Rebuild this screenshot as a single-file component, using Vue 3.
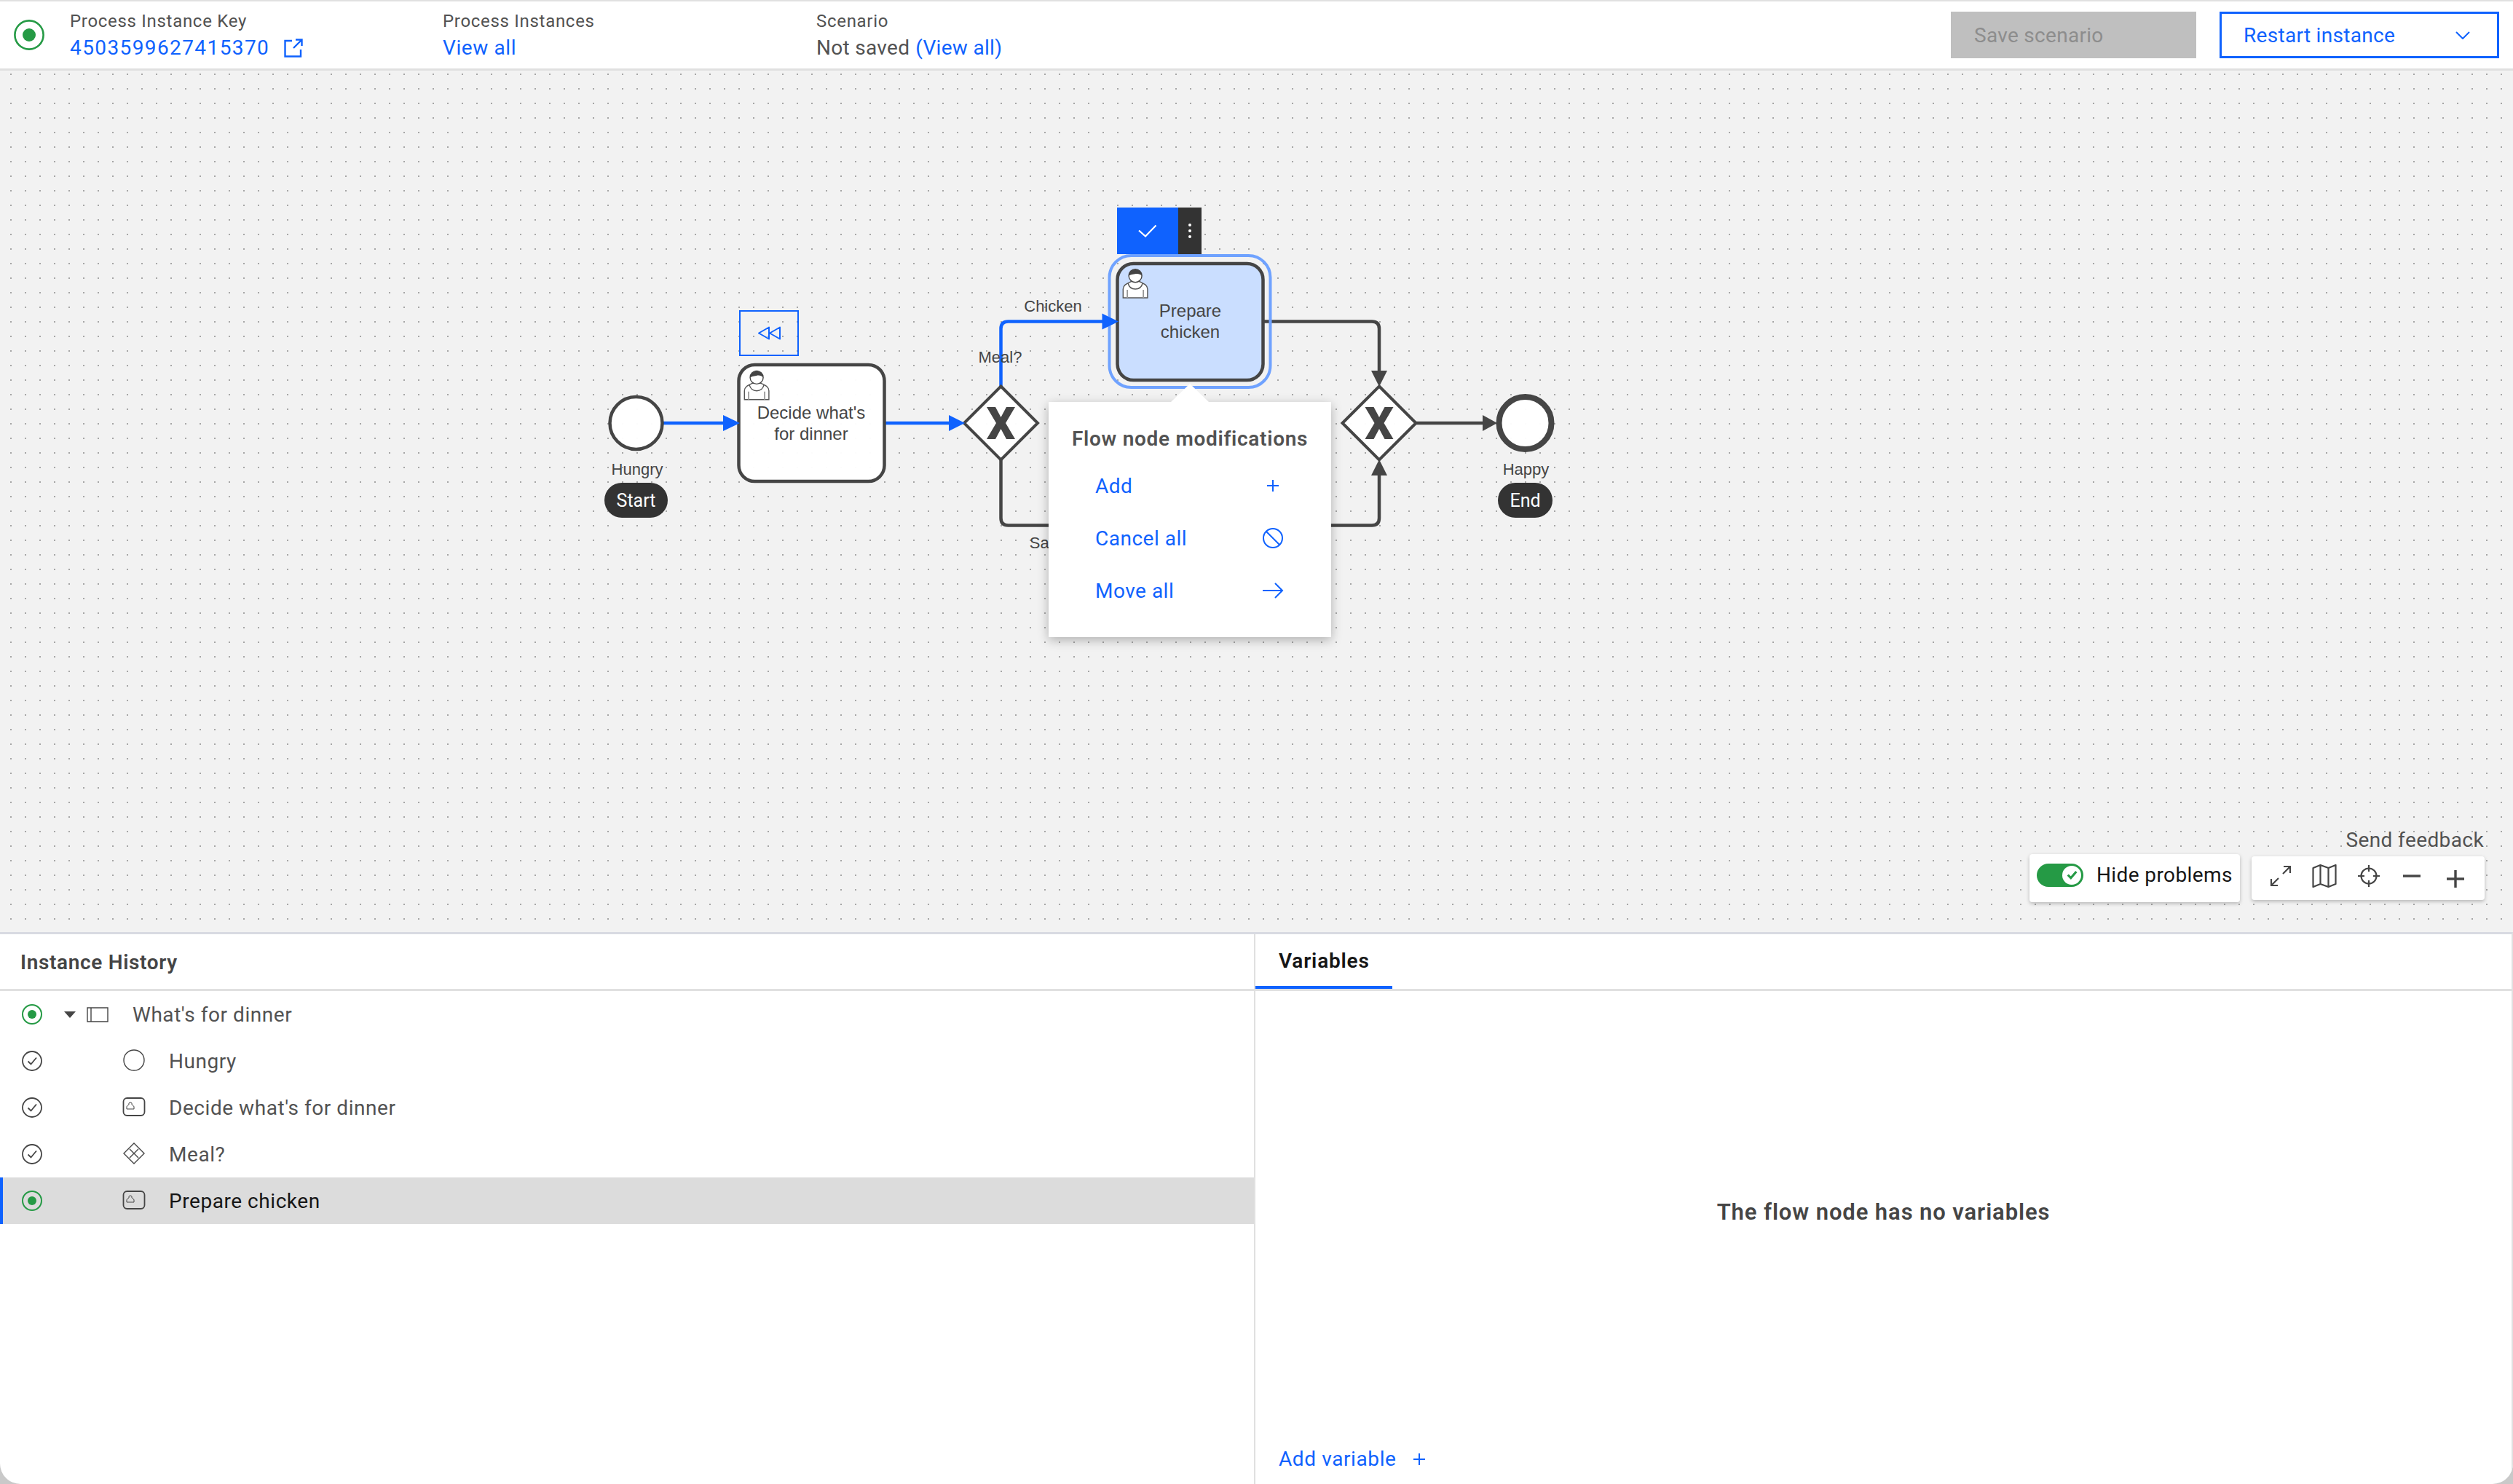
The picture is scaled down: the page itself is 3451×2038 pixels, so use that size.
<template>
  <div class="page">
    <header class="topbar">
      <svg class="head-status" viewBox="0 0 42 42" fill="none">
        <circle cx="21" cy="21" r="19.6" stroke="#259a45" stroke-width="2.6" />
        <circle cx="21" cy="21" r="9" fill="#259a45" />
      </svg>
      <div class="meta meta-key">
        <span class="meta-label">Process Instance Key</span>
        <span class="meta-value">
          <a class="link instance-key">4503599627415370</a>
          <svg class="launch" viewBox="0 0 26 26" fill="none" stroke="#0f62fe" stroke-width="2.4">
            <path d="M11 3H1.5v21.500h21.500V15" />
            <path d="M13 13L24 2M16 1.500h8.500V10" />
          </svg>
        </span>
      </div>
      <div class="meta meta-instances">
        <span class="meta-label">Process Instances</span>
        <span class="meta-value"><a class="link">View all</a></span>
      </div>
      <div class="meta">
        <span class="meta-label">Scenario</span>
        <span class="meta-value scenario-value">Not saved <a class="link">(View all)</a></span>
      </div>
      <div class="actions">
        <button class="btn-save">Save scenario</button>
        <button class="btn-restart">
          Restart instance
          <svg width="20" height="11" viewBox="0 0 20 11" fill="none" stroke="#0f62fe" stroke-width="2">
            <path d="M1 1l9 9 9-9" />
          </svg>
        </button>
      </div>
    </header>

    <section class="canvas">
      <svg class="diagram" viewBox="0 97 3451 1183" width="3451" height="1183">
        <defs>
          <g id="person">
            <path d="M0.700 40V28C0.700 22 7 20 12 17.500H23C28 20 34.300 22 34.300 28V40Z" fill="#fff" stroke="#555" stroke-width="1.400" />
            <path d="M7.500 20C9 26 13 28 17.500 28S26 26 27.500 20" fill="none" stroke="#555" stroke-width="1.400" />
            <path d="M6.500 29V40M28.500 29V40" stroke="#999" stroke-width="1.800" />
            <circle cx="17.500" cy="9.700" r="9" fill="#fff" stroke="#444" stroke-width="1.400" />
            <path d="M8.500 9.700A9 9 0 0 1 26.500 9.700C24 7 21 6.500 17 7.200C13 8 10 8.500 8.500 9.700Z" fill="#444" />
          </g>
          <g id="gateway-x">
            <path d="M0 -50.500L50.500 0L0 50.500L-50.500 0Z" fill="#fff" fill-opacity=".96" stroke="#454545" stroke-width="4" />
            <path d="M-19.500 -22H-7.500L0 -8L7.500 -22H19.500L6.500 0L19.500 22H7.500L0 8L-7.500 22H-19.500L-6.500 0Z" fill="#454545" />
          </g>
        </defs>

        <!-- flows -->
        <g fill="none" stroke-width="4.500">
          <path d="M910 581H995M1215 581H1305M1374.500 531V451.600Q1374.500 441.600 1384.500 441.600H1515" stroke="#0f62fe" />
          <path d="M1374.500 632V711.600Q1374.500 721.600 1384.500 721.600H1884Q1894 721.600 1894 711.600V651" stroke="#454545" />
          <path d="M1735 441.600H1884Q1894 441.600 1894 451.600V510M1945 581H2036" stroke="#454545" />
        </g>

        <!-- events -->
        <circle cx="873.500" cy="581" r="36" fill="#fff" fill-opacity=".96" stroke="#454545" stroke-width="4.500" />
        <circle cx="2094.500" cy="581" r="36" fill="#fff" fill-opacity=".96" stroke="#454545" stroke-width="8" />

        <!-- tasks -->
        <rect x="1014.500" y="501" width="200" height="160" rx="22" fill="#fff" fill-opacity=".96" stroke="#454545" stroke-width="4.500" />
        <use href="#person" x="1021.600" y="508.700" />
        <rect x="1523.500" y="351" width="221" height="181" rx="30" fill="none" stroke="#6fa2ff" stroke-width="4" />
        <rect x="1534.500" y="362" width="200" height="160" rx="22" fill="#cadeff" stroke="#454545" stroke-width="4.500" />
        <use href="#person" x="1541.600" y="369" />

        <use href="#gateway-x" x="1374.500" y="581" />
        <use href="#gateway-x" x="1894" y="581" />

        <!-- arrow heads go over the shapes -->
        <g fill="#0f62fe">
          <path d="M1016 581L993 570V592Z" />
          <path d="M1325 581L1303 570V592Z" />
          <path d="M1536 441.600L1513.500 430.600V452.600Z" />
        </g>
        <g fill="#454545">
          <path d="M1894 531L1883 509H1905Z" />
          <path d="M1894 631L1883 653H1905Z" />
          <path d="M2056 581L2036 570V592Z" />
        </g>

        <!-- labels -->
        <g class="bpmn-label" text-anchor="middle">
          <text x="1114" y="575" font-size="24">Decide what's</text>
          <text x="1114" y="604" font-size="24">for dinner</text>
          <text x="1634.500" y="435" font-size="24">Prepare</text>
          <text x="1634.500" y="464" font-size="24">chicken</text>
          <text x="875" y="652">Hungry</text>
          <text x="2095.500" y="652">Happy</text>
          <text x="1446" y="428">Chicken</text>
          <text x="1373.500" y="498">Meal?</text>
          <text x="1442" y="753">Salad</text>
        </g>
      </svg>

      <!-- diagram overlays -->
      <div class="flag flag-start">Start</div>
      <div class="flag flag-end">End</div>

      <div class="rewind">
        <svg width="33" height="19" viewBox="0 0 33 19" fill="none" stroke="#0f62fe" stroke-width="2">
          <path d="M16 1.500L2 9.500l14 8zM31 1.500L17 9.500l14 8z" stroke-linejoin="round" />
        </svg>
      </div>

      <div class="task-toolbar">
        <div class="toolbar-confirm">
          <svg width="26" height="18" viewBox="0 0 26 18" fill="none" stroke="#fff" stroke-width="2.200">
            <path d="M1 8.500L10 16.500L24.500 1.500" />
          </svg>
        </div>
        <div class="toolbar-more"><i></i><i></i><i></i></div>
      </div>

      <div class="popover">
        <div class="popover-title">Flow node modifications</div>
        <div v-for="item in modifications" :key="item.label" class="popover-row">
          <span>{{ item.label }}</span>
          <svg width="30" height="30" viewBox="0 0 30 30" fill="none" stroke="#0f62fe" stroke-width="2">
            <path v-if="item.icon === 'add'" d="M15 7V23M7 15H23" />
            <template v-else-if="item.icon === 'ban'">
              <circle cx="15" cy="15" r="13" />
              <path d="M6 6L24 24" />
            </template>
            <path v-else d="M1 15H28M18 5L28 15L18 25" />
          </svg>
        </div>
      </div>

      <!-- bottom right controls -->
      <div class="feedback">Send feedback</div>
      <div class="problems">
        <span class="toggle">
          <span class="knob">
            <svg width="15" height="13" viewBox="0 0 18 15" fill="none" stroke="#259a45" stroke-width="3.800">
              <path d="M2 7.500L7 12.500L16 2" />
            </svg>
          </span>
        </span>
        Hide problems
      </div>
      <div class="tools">
        <svg width="30" height="30" viewBox="0 0 30 30" fill="none" stroke="#454545" stroke-width="2.200">
          <path d="M18 12L28 2M19 2H28V11M12 18L2 28M2 19V28H11" />
        </svg>
        <svg width="34" height="34" viewBox="0 0 34 34" fill="none" stroke="#454545" stroke-width="2.200" stroke-linejoin="round">
          <path d="M1.500 6L11.500 2L22.500 6L32.500 2V28L22.500 32L11.500 28L1.500 32ZM11.500 2V28M22.500 6V32" />
        </svg>
        <svg width="32" height="32" viewBox="0 0 32 32" fill="none" stroke="#454545" stroke-width="2.200">
          <circle cx="16" cy="16" r="10.500" />
          <path d="M16 1V10M16 22V31M1 16H10M22 16H31" />
        </svg>
        <svg class="tool-minus" width="26" height="26" viewBox="0 0 26 26" fill="none" stroke="#454545" stroke-width="3.400">
          <path d="M1 13H25" />
        </svg>
        <svg class="tool-plus" width="26" height="26" viewBox="0 0 26 26" fill="none" stroke="#454545" stroke-width="3.400">
          <path d="M1 13H25M13 1V25" />
        </svg>
      </div>
    </section>

    <section class="panels">
      <div class="history">
        <div class="panel-head history-title">Instance History</div>
        <div
          v-for="row in historyRows"
          :key="row.name"
          class="history-row"
          :class="{ selected: row.selected, root: row.kind === 'process' }"
        >
          <svg v-if="row.active" class="status" viewBox="0 0 28 28" fill="none">
            <circle cx="14" cy="14" r="13" stroke="#259a45" stroke-width="2" />
            <circle cx="14" cy="14" r="6" fill="#259a45" />
          </svg>
          <svg v-else class="status" viewBox="0 0 28 28" fill="none" stroke="#454545" stroke-width="1.800">
            <circle cx="14" cy="14" r="13" />
            <path d="M8.500 14.500L12.500 18.500L20 9.500" />
          </svg>

          <template v-if="row.kind === 'process'">
            <span class="caret"></span>
            <svg class="kind-process" width="30" height="21" viewBox="0 0 30 21" fill="none" stroke="#454545" stroke-width="1.400">
              <path d="M1 1H29V20H1ZM6 1V20" />
            </svg>
          </template>
          <svg v-else class="kind" width="32" height="32" viewBox="0 0 32 32" fill="none" stroke="#454545">
            <circle v-if="row.kind === 'event'" cx="16" cy="16" r="14" stroke-width="1.400" />
            <path v-else-if="row.kind === 'gateway'" d="M16 2L30 16L16 30L2 16ZM10 10L22 22M22 10L10 22" stroke-width="1.400" />
            <template v-else>
              <rect x="1.500" y="4" width="29" height="24" rx="5" stroke-width="1.800" />
              <path d="M6 19V16C6 14.500 8 14 9 13V11A2.500 2.500 0 0 1 13 11V13C14 14 16 14.500 16 16V19Z" stroke-width="1" />
            </template>
          </svg>
          <span class="row-name">{{ row.name }}</span>
        </div>
      </div>

      <div class="variables">
        <div class="panel-head tabs">
          <div class="tab">Variables</div>
        </div>
        <div class="empty">The flow node has no variables</div>
        <div class="add-variable">
          Add variable
          <svg width="18" height="18" viewBox="0 0 18 18" fill="none" stroke="#0f62fe" stroke-width="2">
            <path d="M1 9H17M9 1V17" />
          </svg>
        </div>
      </div>
    </section>
  </div>
</template>

<script setup>
const modifications = [
  { label: 'Add', icon: 'add' },
  { label: 'Cancel all', icon: 'ban' },
  { label: 'Move all', icon: 'arrow' }
]

const historyRows = [
  { name: "What's for dinner", kind: 'process', active: true },
  { name: 'Hungry', kind: 'event' },
  { name: "Decide what's for dinner", kind: 'task' },
  { name: 'Meal?', kind: 'gateway' },
  { name: 'Prepare chicken', kind: 'task', active: true, selected: true }
]
</script>

<style>
html,
body {
  margin: 0;
  background: #c9c9c9;
}
</style>

<style scoped>
.page {
  width: 3451px;
  height: 2038px;
  display: flex;
  flex-direction: column;
  overflow: hidden;
  border-radius: 0 0 28px 28px;
  background: #fff;
  color: #525252;
  font-family: Roboto, "Noto Sans", sans-serif;
}

/* top bar */
.topbar {
  height: 97px;
  flex-shrink: 0;
  box-sizing: border-box;
  display: flex;
  align-items: center;
  padding: 0 19px 0 19px;
  border-top: 2px solid #e0e0e0;
  border-bottom: 3px solid #e0e0e0;
}

.head-status {
  width: 42px;
  height: 42px;
  margin-right: 35px;
}

.meta {
  display: flex;
  flex-direction: column;
  gap: 11px;
  padding-top: 1px;
  font-size: 24px;
  line-height: 24px;
}

.meta-key {
  width: 512px;
}

.meta-instances {
  width: 513px;
}

.meta-label {
  letter-spacing: 0.7px;
}

.meta-value {
  display: flex;
  align-items: center;
  gap: 8px;
  font-size: 28px;
  line-height: 28px;
  letter-spacing: 0.6px;
}

.instance-key {
  letter-spacing: 1.4px;
}

.scenario-value {
  letter-spacing: 0.3px;
}

.link {
  color: #0f62fe;
}

.launch {
  width: 26px;
  height: 26px;
  margin-left: 12px;
}

.actions {
  margin-left: auto;
  display: flex;
  gap: 32px;
}

.btn-save,
.btn-restart {
  height: 64px;
  box-sizing: border-box;
  border: 0;
  border-radius: 0;
  font: inherit;
  font-size: 28px;
  letter-spacing: 0.3px;
  text-align: left;
}

.btn-save {
  width: 337px;
  padding: 0 32px;
  background: #bfbfbf;
  color: #8d8d8d;
}

.btn-restart {
  width: 384px;
  display: flex;
  align-items: center;
  justify-content: space-between;
  padding: 0 37px 0 30px;
  background: #fff;
  border: 3px solid #0f62fe;
  color: #0f62fe;
}

/* canvas */
.canvas {
  position: relative;
  flex: 1;
  background-color: #f2f2f2;
  background-image: radial-gradient(circle, #a6a6a6 0.9px, transparent 1.3px);
  background-size: 20px 20px;
  background-position: 5px -5px;
}

.diagram {
  position: absolute;
  top: 0;
  left: 0;
}

.bpmn-label {
  font-family: "Liberation Sans", Arial, sans-serif;
  font-size: 22px;
  fill: #454545;
}

.flag {
  position: absolute;
  top: 566px;
  height: 48px;
  display: flex;
  align-items: center;
  justify-content: center;
  border-radius: 24px;
  background: #333;
  color: #fff;
  font-size: 25px;
}

.flag-start {
  left: 830px;
  width: 87px;
}

.flag-end {
  left: 2057px;
  width: 75px;
}

.rewind {
  position: absolute;
  left: 1015px;
  top: 329px;
  width: 82px;
  height: 63px;
  box-sizing: border-box;
  display: flex;
  align-items: center;
  justify-content: center;
  border: 2.500px solid #0f62fe;
}

.task-toolbar {
  position: absolute;
  left: 1534px;
  top: 188px;
  height: 64px;
  display: flex;
}

.toolbar-confirm {
  width: 84px;
  display: flex;
  align-items: center;
  justify-content: center;
  background: #0f62fe;
}

.toolbar-more {
  width: 32px;
  display: flex;
  flex-direction: column;
  align-items: center;
  justify-content: center;
  gap: 3.500px;
  background: #333;
}

.toolbar-more i {
  width: 4.500px;
  height: 4.500px;
  border-radius: 50%;
  background: #fff;
}

.popover {
  position: absolute;
  left: 1440px;
  top: 455px;
  width: 388px;
  height: 323px;
  box-sizing: border-box;
  padding: 36px 32px 0;
  background: #fff;
  box-shadow: 0 4px 14px rgba(0, 0, 0, 0.28);
}

.popover::before {
  content: "";
  position: absolute;
  left: 168px;
  top: -25px;
  border-left: 26px solid transparent;
  border-right: 26px solid transparent;
  border-bottom: 25px solid #fff;
}

.popover-title {
  font-size: 28px;
  line-height: 30px;
  font-weight: 600;
  white-space: nowrap;
  letter-spacing: 0.7px;
}

.popover-row {
  height: 72px;
  display: flex;
  align-items: center;
  justify-content: space-between;
  padding: 0 33px 0 32px;
  color: #0f62fe;
  font-size: 28px;
  letter-spacing: 0.5px;
}

.popover-title + .popover-row {
  margin-top: 13px;
}

.feedback {
  position: absolute;
  right: 40px;
  top: 1042px;
  font-size: 28px;
  line-height: 30px;
  letter-spacing: 0.4px;
}

.problems {
  position: absolute;
  left: 2787px;
  top: 1076px;
  width: 289px;
  height: 66px;
  box-sizing: border-box;
  display: flex;
  align-items: center;
  gap: 18px;
  padding: 0 0 9px 10px;
  background: #fff;
  border-radius: 4px;
  box-shadow: 0 2px 5px rgba(0, 0, 0, 0.25);
  color: #161616;
  font-size: 28px;
  letter-spacing: 0.4px;
  white-space: nowrap;
}

.toggle {
  position: relative;
  width: 64px;
  height: 32px;
  flex-shrink: 0;
  border-radius: 16px;
  background: #259a45;
}

.knob {
  position: absolute;
  right: 3px;
  top: 3px;
  width: 26px;
  height: 26px;
  display: flex;
  align-items: center;
  justify-content: center;
  border-radius: 50%;
  background: #fff;
}

.tools {
  position: absolute;
  left: 3092px;
  top: 1079px;
  width: 320px;
  height: 60px;
  box-sizing: border-box;
  display: flex;
  align-items: center;
  gap: 28px;
  padding: 0 0 6px 25px;
  background: #fff;
  border-radius: 4px;
  box-shadow: 0 2px 5px rgba(0, 0, 0, 0.25);
}

.tool-minus {
  margin-left: 2px;
}

.tool-plus {
  margin-top: 8px;
  margin-left: 6px;
}

/* bottom panels */
.panels {
  height: 758px;
  flex-shrink: 0;
  box-sizing: border-box;
  display: flex;
  border-top: 3px solid #d8dae2;
  border-right: 2px solid #e0e0e0;
}

.history {
  width: 1722px;
  flex-shrink: 0;
}

.panel-head {
  height: 78px;
  box-sizing: border-box;
  border-bottom: 3px solid #e0e0e0;
}

.history-title {
  display: flex;
  align-items: center;
  padding: 2px 0 0 28px;
  color: #454545;
  font-size: 28px;
  font-weight: 600;
  letter-spacing: 0.65px;
}

.history-row {
  position: relative;
  height: 64px;
  display: flex;
  align-items: center;
  font-size: 28px;
  letter-spacing: 0.55px;
  padding-left: 30px;
}

.history-row.selected {
  background: #dcdcdc;
  color: #161616;
}

.history-row.selected::before {
  content: "";
  position: absolute;
  left: 0;
  top: 0;
  bottom: 0;
  width: 4px;
  background: #0f62fe;
}

.status {
  width: 28px;
  height: 28px;
  flex-shrink: 0;
}

.caret {
  margin-left: 30px;
  border-left: 8px solid transparent;
  border-right: 8px solid transparent;
  border-top: 9px solid #454545;
}

.kind-process {
  margin-left: 15px;
  margin-right: 33px;
}

.kind {
  margin: 0 32px 3px 110px;
  flex-shrink: 0;
}

.variables {
  flex: 1;
  display: flex;
  flex-direction: column;
  border-left: 2px solid #e0e0e0;
}

.tabs {
  display: flex;
}

.tab {
  width: 188px;
  height: 75px;
  box-sizing: border-box;
  padding: 2px 32px 0;
  display: flex;
  align-items: center;
  border-bottom: 4px solid #0f62fe;
  color: #161616;
  font-size: 28px;
  font-weight: 600;
  letter-spacing: 0.8px;
}

.empty {
  flex: 1;
  display: flex;
  align-items: center;
  justify-content: center;
  padding-bottom: 22px;
  color: #454545;
  font-size: 31px;
  font-weight: 600;
  letter-spacing: 0.9px;
}

.add-variable {
  display: flex;
  align-items: center;
  gap: 22px;
  padding: 0 0 19px 32px;
  color: #0f62fe;
  font-size: 28px;
  line-height: 30px;
  letter-spacing: 0.6px;
}
</style>
